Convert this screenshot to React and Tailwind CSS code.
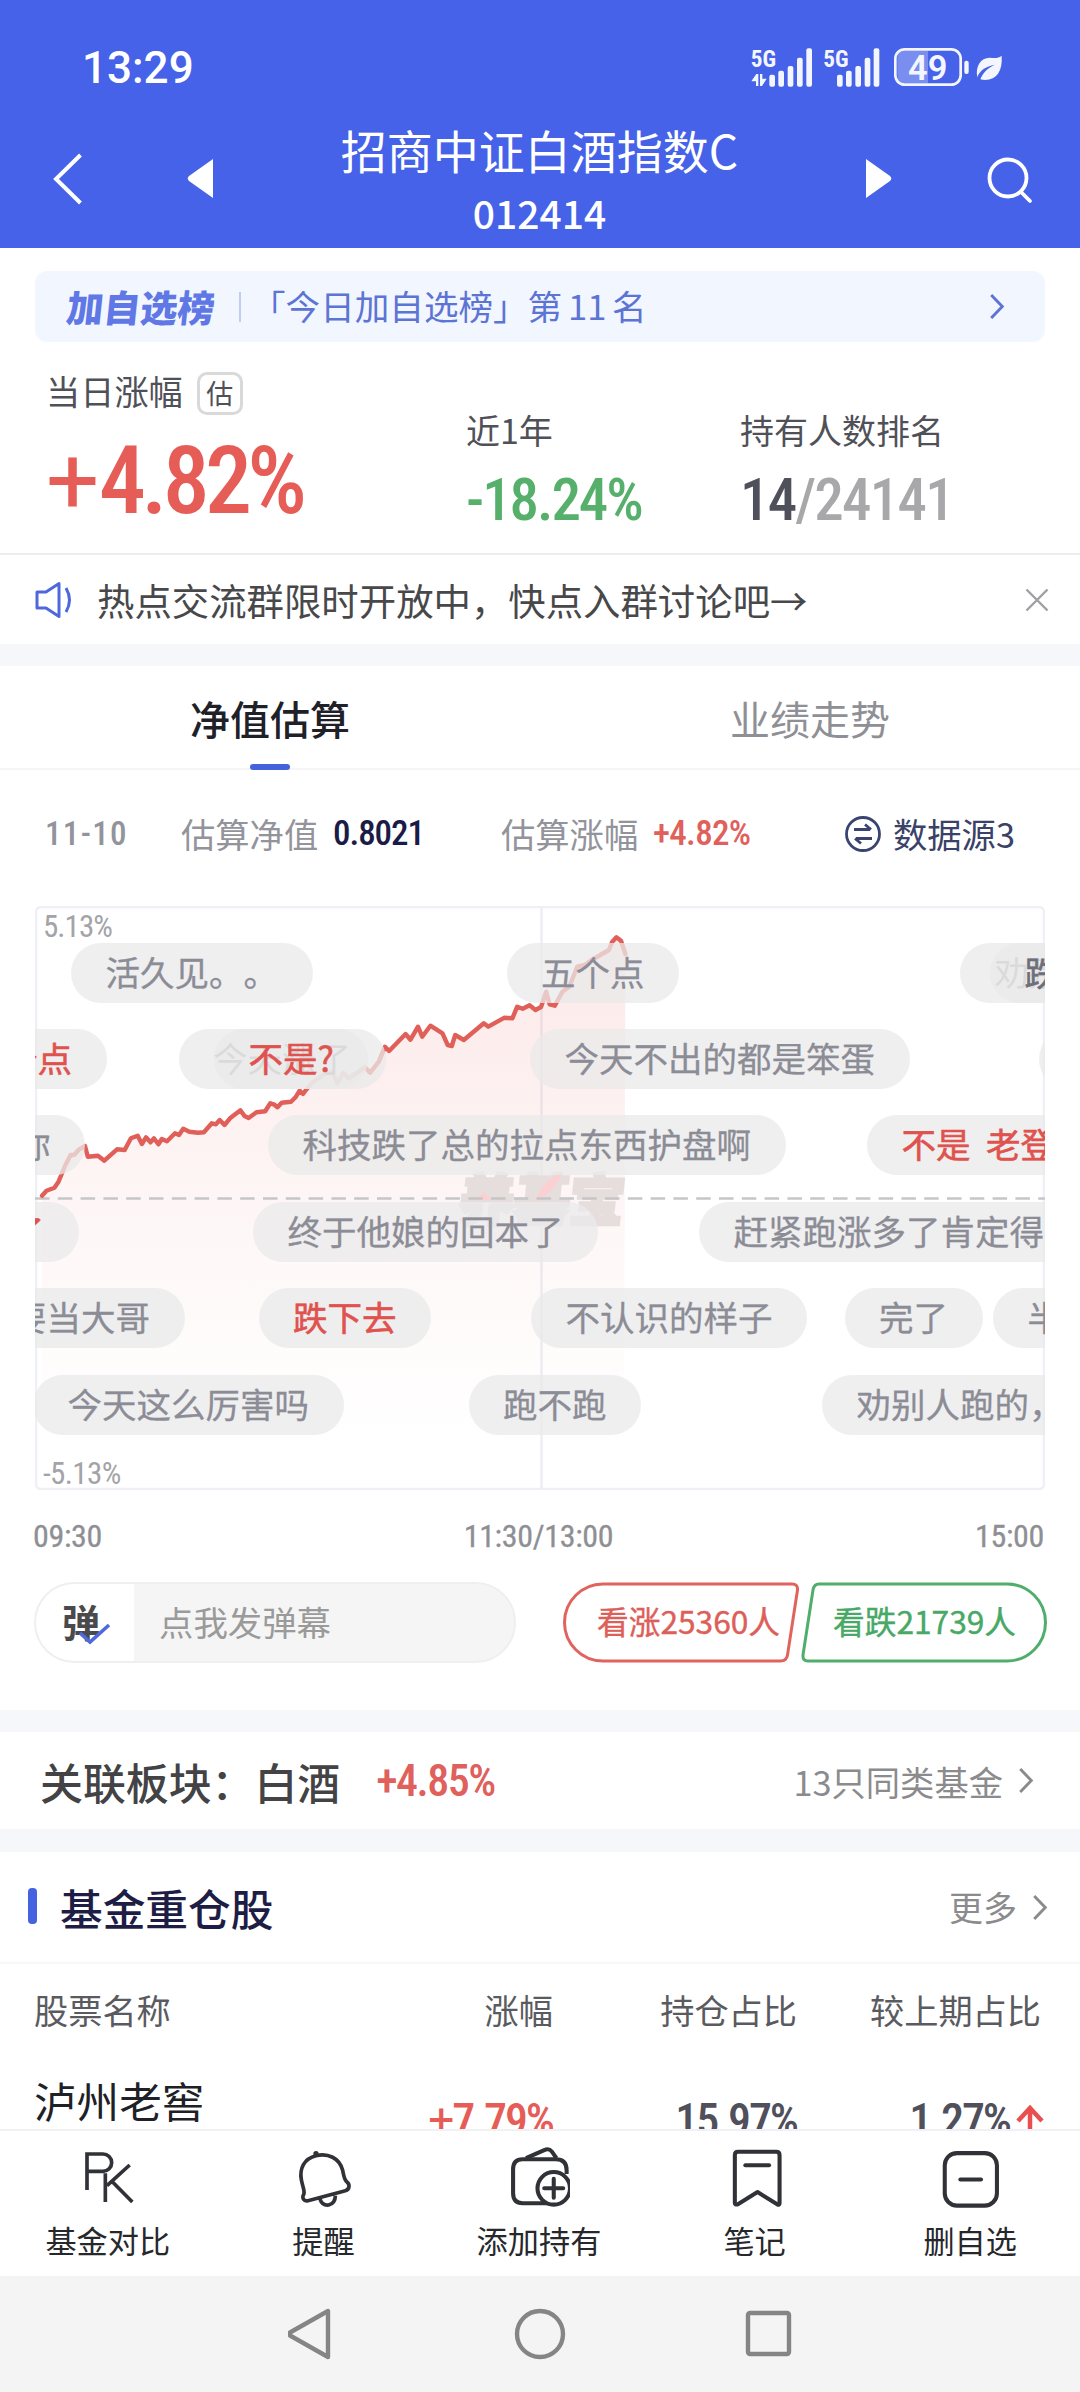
import { useState } from "react";

// intraday line, [x, y] on the 1080px wide canvas
const LINE = [
    [42, 1195.7], [46.5, 1190.7], [54.4, 1187.7], [58.5, 1181.7], [61.3, 1175], [65.4, 1165], [70.6, 1155], [74, 1155],
    [79.2, 1149.3], [85, 1146], [87.8, 1156.7], [98, 1155.7], [104.3, 1160.7], [117, 1149.3], [124.7, 1150], [130.9, 1138.3],
    [137.7, 1135.7], [141.9, 1144], [146, 1137.3], [150.5, 1142.3], [153.9, 1138.3], [158.4, 1144.3], [161.8, 1139],
    [167, 1141.3], [175, 1133.3], [179, 1135], [183.2, 1128.7], [189.4, 1131.7], [198, 1132.7], [203.9, 1132.3],
    [211.8, 1123.3], [215.9, 1124.3], [219.7, 1120], [224.5, 1125], [230, 1118.3], [240.4, 1110.3], [244.5, 1116],
    [248.6, 1118], [256.5, 1112.3], [265.2, 1111.3], [270.3, 1103.3], [274.4, 1104.7], [277.5, 1107.3], [281.7, 1102.7],
    [291, 1101.7], [295.5, 1097.3], [299.6, 1090.7], [303, 1094], [306.5, 1089.3], [311.6, 1083.3], [325.4, 1073.3],
    [332.3, 1071.7], [337.5, 1083.3], [343.3, 1072.7], [348.5, 1078.3], [365, 1067.3], [370.2, 1072.7], [378.8, 1061.7],
    [385, 1046.7], [389.1, 1051], [405.6, 1034], [410.5, 1039.7], [418, 1026.7], [422.2, 1036.7], [430.4, 1025.7],
    [442.5, 1033.3], [447.7, 1045], [451.8, 1046], [455.2, 1035], [463.8, 1040], [483.8, 1023.3], [488.3, 1026.7],
    [504.5, 1017.7], [512.4, 1018.3], [517.2, 1006.7], [522.7, 1008.7], [529.6, 1005.3], [535.5, 1010], [541, 1007],
    [546.2, 991.7], [549.6, 1004.3], [554.8, 1005.7], [562.4, 991.7], [569.3, 986.7], [577.2, 966.7], [584.8, 965],
    [591.7, 960], [600.3, 955], [608.9, 950], [612.3, 941.7], [616.4, 937.3], [621, 940.7], [625.4, 954],
];

const DANMU = [
    { row: 0, x: 36, text: "活久见。。" },
    { row: 0, x: 471.5, text: "五个点" },
    { row: 0, x: 925, text: "劝别人", faded: true },
    { row: 0, x: 955, text: "跌了吧", dark: true },
    { row: 1, x: -66.5, text: "个点", red: true },
    { row: 1, x: 143.5, text: "今天涨了", faded: true },
    { row: 1, x: 179, text: "不是?", red: true },
    { row: 1, x: 495, text: "今天不出的都是笨蛋" },
    { row: 1, x: 1004, text: "加仓" },
    { row: 2, x: -88, text: "有你" },
    { row: 2, x: 233, text: "科技跌了总的拉点东西护盘啊" },
    { row: 2, x: 832, text: "不是  老登", red: true },
    { row: 3, x: -60, text: "了", red: true },
    { row: 3, x: 218, text: "终于他娘的回本了" },
    { row: 3, x: 664, text: "赶紧跑涨多了肯定得" },
    { row: 4, x: -57.5, text: "要当大哥" },
    { row: 4, x: 223.5, text: "跌下去", red: true },
    { row: 4, x: 496, text: "不认识的样子" },
    { row: 4, x: 809.5, text: "完了" },
    { row: 4, x: 958, text: "半仓" },
    { row: 5, x: -2, text: "今天这么厉害吗" },
    { row: 5, x: 433.5, text: "跑不跑" },
    { row: 5, x: 787, text: "劝别人跑的，" },
];

function StatusBar() {
    return (
        <div className="flex h-[110px] items-start justify-between pl-[82px] pr-[77px]">
            <div className="pt-[42px] font-[Roboto] text-[44px] font-medium leading-[52px]">13:29</div>
            <svg className="mt-[46px] h-[42px] w-[253px] overflow-visible" viewBox="90 78 759 126" fill="#f4f6ff">
                <g fontFamily="'Roboto Condensed', sans-serif" fontWeight="700" fontSize="74">
                    <text x="92" y="140" textLength="76" lengthAdjust="spacingAndGlyphs">5G</text>
                    <text x="310" y="140" textLength="76" lengthAdjust="spacingAndGlyphs">5G</text>
                </g>
                <path d="M94 184l15-22h6v36h-7v-14zM120 162h7v14h13l-14 22h-6z" />
                <rect x="148" y="164" width="17" height="36" rx="6" />
                <rect x="175" y="152" width="17" height="48" rx="6" />
                <rect x="203" y="138" width="17" height="62" rx="6" />
                <rect x="231" y="113" width="17" height="87" rx="6" />
                <rect x="259" y="85" width="17" height="115" rx="6" />
                <rect x="351" y="164" width="17" height="36" rx="6" />
                <rect x="378" y="152" width="17" height="48" rx="6" />
                <rect x="406" y="138" width="17" height="62" rx="6" />
                <rect x="434" y="113" width="17" height="87" rx="6" />
                <rect x="461" y="85" width="17" height="115" rx="6" />
                <path d="M624 92v98h-70q-22 0-22-26v-46q0-26 22-26z" opacity=".3" />
                <rect x="526" y="88" width="196" height="106" rx="28" fill="none" stroke="#f4f6ff" strokeWidth="8" />
                <rect x="733" y="122" width="13" height="40" rx="6" />
                <text x="564" y="181" fontFamily="Roboto" fontWeight="600" fontSize="106" textLength="118" lengthAdjust="spacingAndGlyphs">49</text>
                <path d="M845 107c3 46-14 72-50 73-10 0-14-2-14-2 8-20 22-34 44-44-28 6-46 16-53 38-7-34 12-62 43-58 14 1 24-1 30-7z" />
            </svg>
        </div>
    );
}

function Header() {
    return (
        <header className="h-[248px] bg-[#4562e8] text-white">
            <StatusBar />
            <div className="flex h-[138px] items-center">
                <svg className="ml-[49px] h-[60px] w-[40px]" viewBox="0 0 40 60" fill="none" stroke="#fff" strokeWidth="4">
                    <path d="M31.500 6L7 30l24.500 24" />
                </svg>
                <svg className="ml-[98px] h-[40px] w-[27px]" viewBox="0 0 27 40" fill="#fff">
                    <path d="M26 0v39L2 22q-2.500-2.500 0-5z" />
                </svg>
                <div className="flex flex-1 flex-col items-center pt-[3px]">
                    <h1 className="text-[46px] font-normal leading-[60px]">招商中证白酒指数C</h1>
                    <div className="mt-[3px] text-[39px] font-medium leading-[60px]">012414</div>
                </div>
                <svg className="h-[40px] w-[27px]" viewBox="0 0 27 40" fill="#fff">
                    <path d="M1 0v39l24-17q2.500-2.500 0-5z" />
                </svg>
                <svg className="ml-[92px] mr-[42px] h-[50px] w-[54px]" viewBox="0 0 54 50" fill="none" stroke="#fff" strokeWidth="3.800">
                    <circle cx="24" cy="24" r="18.500" />
                    <path d="M37 38l9 9" strokeLinecap="round" />
                </svg>
            </div>
        </header>
    );
}

function Chevron({ className }) {
    return (
        <svg className={className} viewBox="0 0 16 28" fill="none" stroke="currentColor" strokeWidth="3">
            <path d="M2 2l11.500 12L2 26" />
        </svg>
    );
}

function Summary() {
    return (
        <section className="bg-white pt-[23px]">
            <div className="mx-[35px] flex h-[71px] items-center rounded-[12px] bg-[#f2f6fe] text-[#5c74d4]">
                <span className="mb-[2px] ml-[32px] w-[150px] -skew-x-6 whitespace-nowrap text-[37px] font-black leading-[40px] text-[#5f78e6]">加自选榜</span>
                <span className="ml-[22px] h-[30px] w-[2px] bg-[#c0ccf4]"></span>
                <span className="mb-[3px] ml-[10px] whitespace-nowrap text-[34.600px] leading-[50px] [word-spacing:-2px]">「今日加自选榜」第 11 名</span>
                <Chevron className="ml-auto mr-[40px] h-[27px] w-[16px]" />
            </div>
            <div className="flex h-[211px] pl-[46px]">
                <div className="w-[420px] pt-[23px]">
                    <div className="flex items-center">
                        <span className="text-[34.200px] leading-[50px] text-[#505158]">当日涨幅</span>
                        <span className="ml-[14px] mt-[6px] flex h-[43px] w-[46px] items-center justify-center rounded-[10px] border-[3px] border-[#d9d9d9] pb-[2px] text-[27px] leading-none text-[#505158]">估</span>
                    </div>
                    <div className="mt-[16px] flex font-['Roboto_Condensed'] text-[94px] font-medium leading-[100px] tracking-[-0.05em] text-[#e65d57]">
                        <span className="w-[53px] font-[Roboto] font-normal tracking-normal">+</span>
                        <span>4.82%</span>
                    </div>
                </div>
                <div className="w-[274px] pt-[63px]">
                    <div className="text-[34px] leading-[50px] text-[#505158]">近1年</div>
                    <div className="mt-[15px] font-['Roboto_Condensed'] text-[59px] font-medium leading-[60px] tracking-[-0.035em] text-[#56b06c]">-18.24%</div>
                </div>
                <div className="pt-[63px]">
                    <div className="text-[34px] leading-[50px] text-[#505158]">持有人数排名</div>
                    <div className="mt-[15px] whitespace-nowrap font-['Roboto_Condensed'] text-[59px] font-medium leading-[60px] tracking-[-0.03em] text-[#a8a8aa]">
                        <span className="text-[#50505c]">14</span>/24141
                    </div>
                </div>
            </div>
            <div className="flex h-[91px] items-center border-t-2 border-[#ededef]">
                <svg className="ml-[34px] h-[40px] w-[42px]" viewBox="0 0 42 40" fill="none" stroke="#4e68dc" strokeWidth="3" strokeLinejoin="round">
                    <path d="M3 12h9L25 3.500v33L12 28H3zM32 8q7 12 0 24" />
                </svg>
                <span className="ml-[21px] text-[37.400px] leading-[54px] text-[#48484a]">热点交流群限时开放中，快点入群讨论吧→</span>
                <svg className="ml-auto mr-[31px] h-[24px] w-[24px]" viewBox="0 0 24 24" fill="none" stroke="#a0a0a4" strokeWidth="2.400">
                    <path d="M1.500 1.500l21 21M22.500 1.500l-21 21" />
                </svg>
            </div>
        </section>
    );
}

function Tabs() {
    const [tab, setTab] = useState("estimate");
    const items = [
        { key: "estimate", label: "净值估算" },
        { key: "trend", label: "业绩走势" },
    ];
    return (
        <div className="grid h-[104px] grid-cols-2 border-b-2 border-[#f5f5f6]">
            {items.map((it) => (
                <button key={it.key} onClick={() => setTab(it.key)} className="flex flex-col items-center pt-[22px]">
                    <span className={tab === it.key ? "text-[40px] font-medium leading-[60px] text-[#202128]" : "text-[40px] leading-[60px] text-[#8f9096]"}>{it.label}</span>
                    {tab === it.key && <span className="mt-[16px] h-[6px] w-[40px] rounded-[3px] bg-[#4562dc]"></span>}
                </button>
            ))}
        </div>
    );
}

function Chart() {
    const points = LINE.map((p) => p.join(",")).join(" ");
    return (
        <div className="relative mx-[35px] h-[584px] w-[1010px] overflow-hidden">
            <svg className="h-[584px] w-[1010px]" viewBox="35 906 1010 584" fill="none">
                <defs>
                    <linearGradient id="area" x1="0" y1="937" x2="0" y2="1440" gradientUnits="userSpaceOnUse">
                        <stop offset="0" stopColor="#e8504a" stopOpacity=".13" />
                        <stop offset=".5" stopColor="#e8504a" stopOpacity=".055" />
                        <stop offset="1" stopColor="#e8504a" stopOpacity="0" />
                    </linearGradient>
                </defs>
                <rect x="36" y="907" width="1008" height="582" rx="5" stroke="#eff0f5" strokeWidth="2.500" />
                <path d="M541.500 907v582" stroke="#eeeef3" strokeWidth="2.500" />
                <polygon points={`42,1440 ${points} 624,1440`} fill="url(#area)" />
                <g transform="translate(457 1221) skewX(-6)">
                    <text x="0" y="0" fontFamily="'Noto Sans CJK SC', sans-serif" fontWeight="900" fontSize="56" fill="#e6dedd" stroke="#e6dedd" strokeWidth="3" textLength="166">养基宝</text>
                </g>
                <path d="M484 1192l8 8h-18zM534 1202q22-10 28-30l-14 8q-7 8-14 22z" fill="#fbd0d3" />
                <path d="M35 1198.500h1010" stroke="#c6c5c8" strokeWidth="2.400" strokeDasharray="14.500 8.300" />
                <polyline points={points} stroke="#e15f59" strokeWidth="4.400" strokeLinejoin="round" strokeLinecap="round" />
            </svg>
            <span className="absolute left-[8px] top-[3px] font-['Roboto_Condensed'] text-[31px] leading-[36px] tracking-[-0.03em] text-[#a3a3a8]">5.13%</span>
            <span className="absolute bottom-[-2px] left-[8px] font-['Roboto_Condensed'] text-[31px] leading-[36px] tracking-[-0.02em] text-[#a3a3a8]">-5.13%</span>
            {DANMU.map((d, i) => (
                <span
                    key={i}
                    className={`absolute h-[60px] whitespace-pre rounded-full bg-[#e9e9e9]/75 px-[34.500px] text-[34.500px] leading-[57px] [text-spacing-trim:space-all] ${d.red ? "text-[#e0524e] [-webkit-text-stroke:0.6px]" : d.faded ? "text-[#8e8f98]/70" : d.dark ? "text-[#6e6f7a] [-webkit-text-stroke:0.6px]" : "text-[#8b8c96] [-webkit-text-stroke:0.3px]"}`}
                    style={{ left: d.x, top: 36.5 + d.row * 86.4 }}
                >
                    {d.text}
                </span>
            ))}
        </div>
    );
}

function Estimate() {
    return (
        <section className="bg-white">
            <div className="flex h-[136px] items-center pb-[9px] pl-[45px] text-[34.300px] leading-[50px] text-[#92939b]">
                <span className="w-[136px] font-['Roboto_Condensed'] text-[33px] font-medium tracking-[0.04em]">11-10</span>
                <span className="mb-[2px] w-[152px]">估算净值</span>
                <span className="w-[168px] font-['Roboto_Condensed'] text-[35px] font-medium tracking-[-0.03em] text-[#1b1b48]">0.8021</span>
                <span className="mb-[2px] w-[152px]">估算涨幅</span>
                <span className="w-[191px] font-['Roboto_Condensed'] text-[35px] font-medium tracking-[-0.02em] text-[#e0605c]">+4.82%</span>
                <svg className="h-[38px] w-[38px]" viewBox="0 0 38 38" fill="none" stroke="#3a4470" strokeWidth="2.800">
                    <circle cx="19" cy="19" r="16.500" />
                    <path d="M10 14.500h16M21 9.500l6 5M28 23.500H12M17 28.500l-6-5" />
                </svg>
                <span className="mb-[2px] ml-[11px] text-[#3a4268]">数据源3</span>
            </div>
            <Chart />
            <div className="flex h-[92px] items-center justify-between pb-[1px] pl-[33px] pr-[36px] font-['Roboto_Condensed'] text-[32px] leading-none tracking-[-0.01em] text-[#8e8f94] [-webkit-text-stroke:0.3px]">
                <span>09:30</span>
                <span>11:30/13:00</span>
                <span>15:00</span>
            </div>
            <div className="flex h-[128px] pl-[34px]">
                <div className="flex h-[81px] w-[482px] overflow-hidden rounded-full border-2 border-[#efefef] bg-[#f5f5f5]">
                    <div className="relative flex h-full w-[98px] items-center bg-white pl-[26px]">
                        <span className="mb-[3px] text-[38px] font-bold leading-[50px] text-[#4a4a4c]">弹</span>
                        <svg className="absolute left-[42px] top-[38px] h-[24px] w-[34px]" viewBox="0 0 34 24" fill="none" stroke="#4f68dc" strokeWidth="3.600">
                            <path d="M2 11l10 9L31 3" />
                        </svg>
                    </div>
                    <span className="ml-[25px] pt-[12px] text-[34.400px] leading-[50px] text-[#9a9a9a]">点我发弹幕</span>
                </div>
                <button className="relative ml-[47px] h-[81px] w-[236px]">
                    <svg className="absolute inset-0 h-[81px] w-[236px]" viewBox="0 0 236 81" fill="none" stroke="#e0635e" strokeWidth="3">
                        <path d="M40 2H229q6 0 5.500 6L224.500 73q-1 6-7 6H40A38.500 38.500 0 0 1 40 2z" />
                    </svg>
                    <span className="absolute left-[34px] top-[15px] whitespace-nowrap text-[31.700px] leading-[46px] text-[#dd5f5a] [-webkit-text-stroke:0.4px]">看涨25360人</span>
                </button>
                <button className="relative ml-[2px] h-[81px] w-[246px]">
                    <svg className="absolute inset-0 h-[81px] w-[246px]" viewBox="0 0 246 81" fill="none" stroke="#4fae6b" strokeWidth="3">
                        <path d="M206 2H18q-5 0-6 6L2 73q-.500 6 5 6H206A38.500 38.500 0 0 0 206 2z" />
                    </svg>
                    <span className="absolute left-[32px] top-[15px] whitespace-nowrap text-[31.700px] leading-[46px] text-[#48a866] [-webkit-text-stroke:0.4px]">看跌21739人</span>
                </button>
            </div>
        </section>
    );
}

function Holdings() {
    return (
        <section className="h-[277px] overflow-hidden bg-white">
            <div className="flex h-[112px] items-center border-b-2 border-[#f8f8f9]">
                <span className="mb-[2px] ml-[28px] h-[36px] w-[9px] rounded-[4px] bg-[#4562e0]"></span>
                <h2 className="ml-[23px] text-[42.700px] font-medium leading-[60px] text-[#1d1d45]">基金重仓股</h2>
                <span className="ml-auto text-[34px] leading-[50px] text-[#8b8b8e]">更多</span>
                <Chevron className="ml-[15px] mr-[32px] h-[27px] w-[16px] text-[#8b8b8e]" />
            </div>
            <div className="flex h-[90px] items-center text-[34.200px] leading-[50px] text-[#5a5b60]">
                <span className="ml-[34px] w-[219px]">股票名称</span>
                <span className="w-[300px] text-right">涨幅</span>
                <span className="w-[244px] text-right">持仓占比</span>
                <span className="w-[244px] text-right">较上期占比</span>
            </div>
            <div className="flex items-start font-['Roboto_Condensed'] text-[46px] font-medium leading-[54px] tracking-[-0.045em] text-[#50505c]">
                <span className="ml-[34px] mt-[16px] w-[219px] font-['Noto_Sans_CJK_SC'] text-[42.600px] font-normal leading-[60px] tracking-normal text-[#202126]">泸州老窖</span>
                <span className="mt-[39px] flex w-[300px] justify-end text-[#e65d57]">
                    <span className="font-[Roboto] font-normal">+</span>7.79%
                </span>
                <span className="mt-[39px] w-[244px] text-right">15.97%</span>
                <span className="mt-[39px] w-[213px] text-right">1.27%</span>
                <svg className="ml-[6px] mt-[51px] h-[34px] w-[28px]" viewBox="0 0 28 34" fill="none" stroke="#e94f50" strokeWidth="4.500">
                    <path d="M14 34V4M2 16L14 3l12 13" />
                </svg>
            </div>
        </section>
    );
}

function Action({ label, children, viewBox }) {
    return (
        <button className="flex flex-col items-center pt-[16px]">
            <svg className="h-[62px] w-[62px]" viewBox={viewBox} fill="none" stroke="#313238" strokeWidth="12" strokeLinejoin="round">
                {children}
            </svg>
            <span className="mt-[8px] text-[31.200px] leading-[46px] text-[#27282c]">{label}</span>
        </button>
    );
}

function BottomBar() {
    return (
        <footer>
            <div className="grid h-[147px] grid-cols-5 border-t-2 border-[#f0f1f5] bg-white pr-[2px]">
                <Action label="基金对比" viewBox="48 24 186 186">
                    <path d="M78 153V45h48a26 26 0 0 1 0 52H80M133 103v86M206 78l-68 62M154 128l60 61" strokeWidth="11" strokeLinejoin="miter" />
                </Action>
                <Action label="提醒" viewBox="696 24 186 186">
                    <path d="M768 50c-36 8-50 40-44 72 4 22 10 32 8 42-8 14 0 24 12 21l112-30c14-4 14-20 4-27-8-8-8-16-12-34-10-38-44-52-80-44zM780 180q6 20 26 18 20-6 20-28" strokeWidth="11" />
                    <circle cx="768" cy="44" r="5" fill="#313238" strokeWidth="6" />
                </Action>
                <Action label="添加持有" viewBox="55 24 183 183">
                    <path d="M228 104V92q0-32-32-32H98Q70 60 70 90v70q0 30 28 30h92" />
                    <path d="M108 57l54-24q14-6 22 4l14 20" />
                    <circle cx="190" cy="146" r="48" fill="#fff" strokeWidth="12" />
                    <path d="M190 118v56M162 146h56" strokeLinecap="round" />
                </Action>
                <Action label="笔记" viewBox="692 24 183 183">
                    <path d="M734 38h112q10 0 10 10v142q0 6-7 3l-58-36-58 36q-9 3-9-4V48q0-10 10-10z" />
                    <path d="M755 78h70" strokeLinecap="round" />
                </Action>
                <Action label="删自选" viewBox="1332 24 183 183">
                    <rect x="1349" y="42" width="154" height="155" rx="36" />
                    <path d="M1395 120h61" strokeLinecap="round" />
                </Action>
            </div>
            <div className="flex h-[116px] items-center justify-center bg-[#f4f4f4]">
                <svg className="h-[56px] w-[504px]" viewBox="288 2306 504 56" fill="none" stroke="#858585" strokeWidth="4.400" strokeLinejoin="round">
                    <path d="M328 2311v46L290 2335.500q-1.500-1.500 0-3z" />
                    <circle cx="540" cy="2334" r="23" />
                    <rect x="748" y="2313" width="41" height="41" rx="2" />
                </svg>
            </div>
        </footer>
    );
}

function App() {
    return (
        <div className="flex h-[2392px] w-[1080px] flex-col overflow-hidden bg-[#f5f7fb] font-['Noto_Sans_CJK_SC',sans-serif]">
            <Header />
            <Summary />
            <div className="mt-[22px] bg-white">
                <Tabs />
                <Estimate />
            </div>
            <div className="mt-[22px] flex h-[97px] items-center bg-white">
                <span className="ml-[40px] text-[42.900px] font-medium leading-[60px] text-[#434345]">关联板块：白酒</span>
                <span className="ml-[36px] font-['Roboto_Condensed'] text-[44px] font-medium leading-[60px] tracking-[-0.035em] text-[#e0605c]">+4.85%</span>
                <span className="ml-auto text-[34.300px] leading-[50px] text-[#8b8b8e]">13只同类基金</span>
                <Chevron className="ml-[15px] mr-[46px] h-[27px] w-[16px] text-[#8b8b8e]" />
            </div>
            <div className="h-[23px]"></div>
            <Holdings />
            <BottomBar />
        </div>
    );
}

export default App;
